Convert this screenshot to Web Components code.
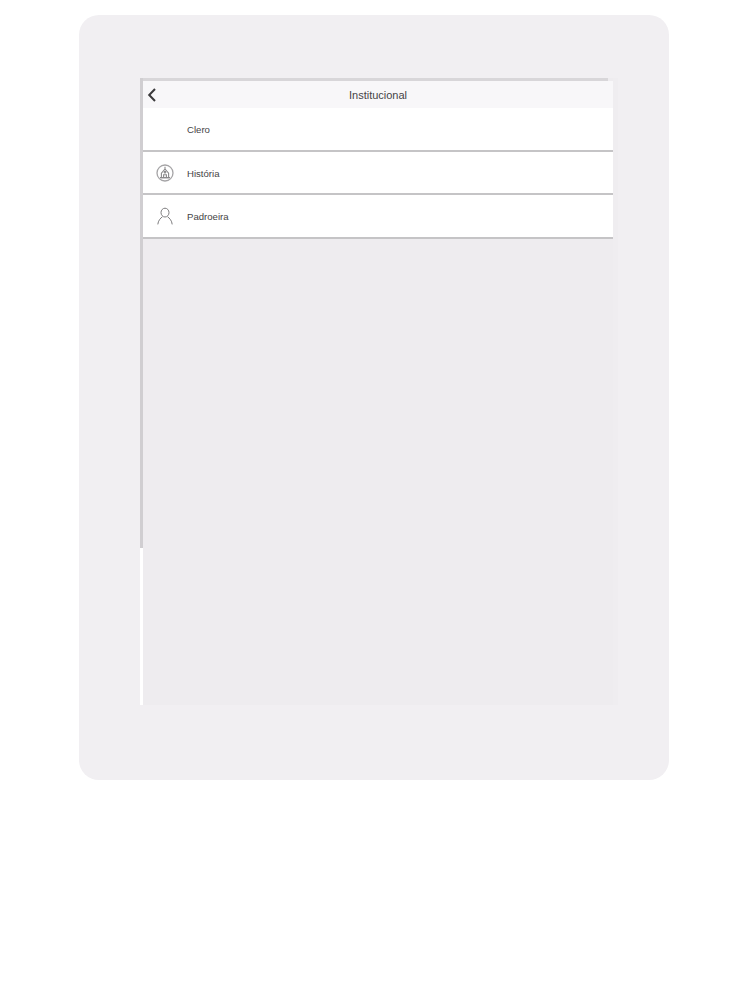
<!DOCTYPE html>
<html lang="pt">
<head>
<meta charset="utf-8">
<title>Institucional</title>
<style>
  html, body { margin: 0; background: #fff; }
  body { font-family: "Liberation Sans", Arial, sans-serif; height: 1000px; overflow: hidden; }
</style>
</head>
<body>
<tablet-frame>
  <nav-bar title="Institucional"></nav-bar>
  <menu-row label="Clero"></menu-row>
  <menu-row label="História" icon="church"></menu-row>
  <menu-row label="Padroeira" icon="person"></menu-row>
</tablet-frame>

<script>
class TabletFrame extends HTMLElement {
  constructor() {
    super();
    this.attachShadow({ mode: 'open' });
    this.shadowRoot.innerHTML = `
      <style>
        :host {
          display: block;
          box-sizing: border-box;
          width: 590px;
          height: 765px;
          margin: 15px 0 0 79px;
          padding: 63px 0 0 61px;
          background: #f1eff2;
          border-radius: 20px;
        }
        .screen {
          display: flex;
          width: 473px;
          height: 627px;
          box-shadow: 5px 0 0 #efedf0;
        }
        .edge {
          display: flex;
          flex-direction: column;
          flex: none;
          width: 3px;
        }
        .edge .grey { height: 470px; background: #d0ced1; }
        .edge .white { flex: 1; background: #fff; }
        .main {
          flex: 1;
          display: flex;
          flex-direction: column;
          background: #eeecef;
        }
        .top { height: 3px; margin-right: 5px; background: #d8d6d9; flex: none; }
      </style>
      <div class="screen">
        <div class="edge"><div class="grey"></div><div class="white"></div></div>
        <div class="main">
          <div class="top"></div>
          <slot></slot>
        </div>
      </div>
    `;
  }
}

class NavBar extends HTMLElement {
  constructor() {
    super();
    this.attachShadow({ mode: 'open' });
    this.shadowRoot.innerHTML = `
      <style>
        :host {
          display: flex;
          align-items: center;
          justify-content: center;
          position: relative;
          height: 27px;
          background: #f8f7f9;
          font: 11px "Liberation Sans", Arial, sans-serif;
          color: #454446;
        }
        svg { position: absolute; left: 4px; top: 7px; }
      </style>
      <svg width="10" height="14" viewBox="0 0 10 14" fill="none">
        <path d="M8 1 L2.2 7 L8 13" stroke="#3a393b" stroke-width="2"/>
      </svg>
      <span class="title"></span>
    `;
  }

  connectedCallback() {
    this.shadowRoot.querySelector('.title').textContent = this.getAttribute('title');
  }
}

const ICONS = {
  church: `<svg width="20" height="20" viewBox="0 0 20 20" fill="none" stroke="#8a898b" stroke-width="1.1">
      <circle cx="10" cy="10" r="8" stroke="#a5a4a6" stroke-width="1.3"/>
      <path d="M10 3.8V6M6.4 14.6V10.2L10 6L13.6 10.2V14.6Z"/>
      <path d="M5 14.6H15M8.6 14.6V11.8H11.4V14.6"/>
      <circle cx="10" cy="9.2" r=".8"/>
    </svg>`,
  person: `<svg width="20" height="20" viewBox="0 0 20 20" fill="none" stroke="#7d7c7e" stroke-width="1">
      <ellipse cx="10" cy="5.6" rx="4" ry="4.4"/>
      <path d="M2.8 17.4C3.2 13.6 5.4 11.2 7.4 9.8M17.2 17.4C16.8 13.6 14.6 11.2 12.6 9.8"/>
    </svg>`
};

class MenuRow extends HTMLElement {
  constructor() {
    super();
    this.attachShadow({ mode: 'open' });
    this.shadowRoot.innerHTML = `
      <style>
        :host {
          display: flex;
          align-items: center;
          box-sizing: border-box;
          height: 43.5px;
          padding-top: 2px;
          background: #fff;
          border-bottom: 2px solid #c5c4c6;
          font: 9.6px "Liberation Sans", Arial, sans-serif;
          color: #454446;
        }
        .icon {
          display: flex;
          align-items: center;
          justify-content: center;
          flex: none;
          width: 20px;
          height: 20px;
          margin: 0 12px;
        }
      </style>
      <div class="icon"></div>
      <span class="label"></span>
    `;
  }

  connectedCallback() {
    this.shadowRoot.querySelector('.label').textContent = this.getAttribute('label');
    const icon = this.getAttribute('icon');
    if (icon) {
      this.shadowRoot.querySelector('.icon').innerHTML = ICONS[icon];
    }
  }
}

customElements.define('tablet-frame', TabletFrame);
customElements.define('nav-bar', NavBar);
customElements.define('menu-row', MenuRow);
</script>
</body>
</html>
